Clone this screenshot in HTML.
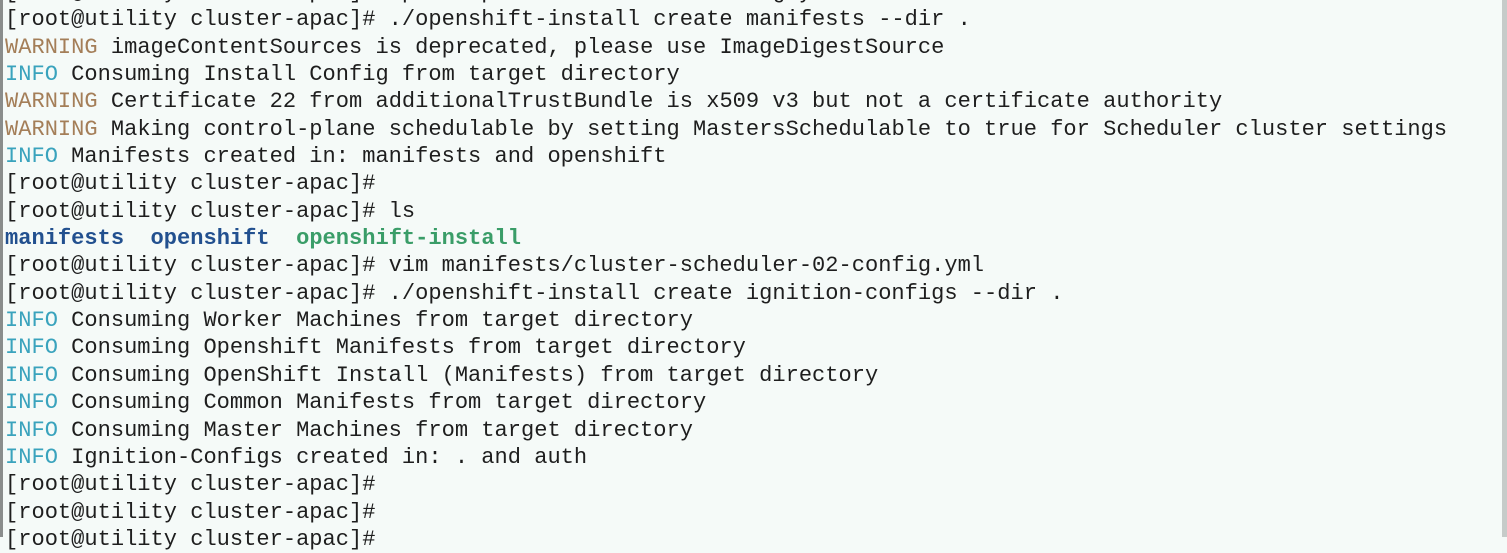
<!DOCTYPE html>
<html><head><meta charset="utf-8"><style>
html,body{margin:0;padding:0;width:1507px;height:537px;overflow:hidden;background:#f5faf8;}
.lb{position:absolute;left:0;top:0;width:3px;height:537px;background:#8a8d8c;}
.sb{position:absolute;right:0;top:0;width:5px;height:537px;background:#c6cbc9;}
pre{position:absolute;left:5px;top:-21px;margin:0;font-family:"Liberation Mono","DejaVu Sans Mono",monospace;font-size:22.05px;line-height:27.35px;color:#1e1e1e;}
.w{color:#a47e58}.i{color:#3aa3bd}.b{color:#22508f;font-weight:bold}.g{color:#3a9d68;font-weight:bold}
</style></head><body>
<div class="lb"></div><div class="sb"></div>
<pre>[root@utility cluster-apac]# cp ../openshift-install-config.yaml .
[root@utility cluster-apac]# ./openshift-install create manifests --dir .
<span class="w">WARNING</span> imageContentSources is deprecated, please use ImageDigestSource
<span class="i">INFO</span> Consuming Install Config from target directory
<span class="w">WARNING</span> Certificate 22 from additionalTrustBundle is x509 v3 but not a certificate authority
<span class="w">WARNING</span> Making control-plane schedulable by setting MastersSchedulable to true for Scheduler cluster settings
<span class="i">INFO</span> Manifests created in: manifests and openshift
[root@utility cluster-apac]#
[root@utility cluster-apac]# ls
<span class="b">manifests</span>  <span class="b">openshift</span>  <span class="g">openshift-install</span>
[root@utility cluster-apac]# vim manifests/cluster-scheduler-02-config.yml
[root@utility cluster-apac]# ./openshift-install create ignition-configs --dir .
<span class="i">INFO</span> Consuming Worker Machines from target directory
<span class="i">INFO</span> Consuming Openshift Manifests from target directory
<span class="i">INFO</span> Consuming OpenShift Install (Manifests) from target directory
<span class="i">INFO</span> Consuming Common Manifests from target directory
<span class="i">INFO</span> Consuming Master Machines from target directory
<span class="i">INFO</span> Ignition-Configs created in: . and auth
[root@utility cluster-apac]#
[root@utility cluster-apac]#
[root@utility cluster-apac]#</pre>
</body></html>
